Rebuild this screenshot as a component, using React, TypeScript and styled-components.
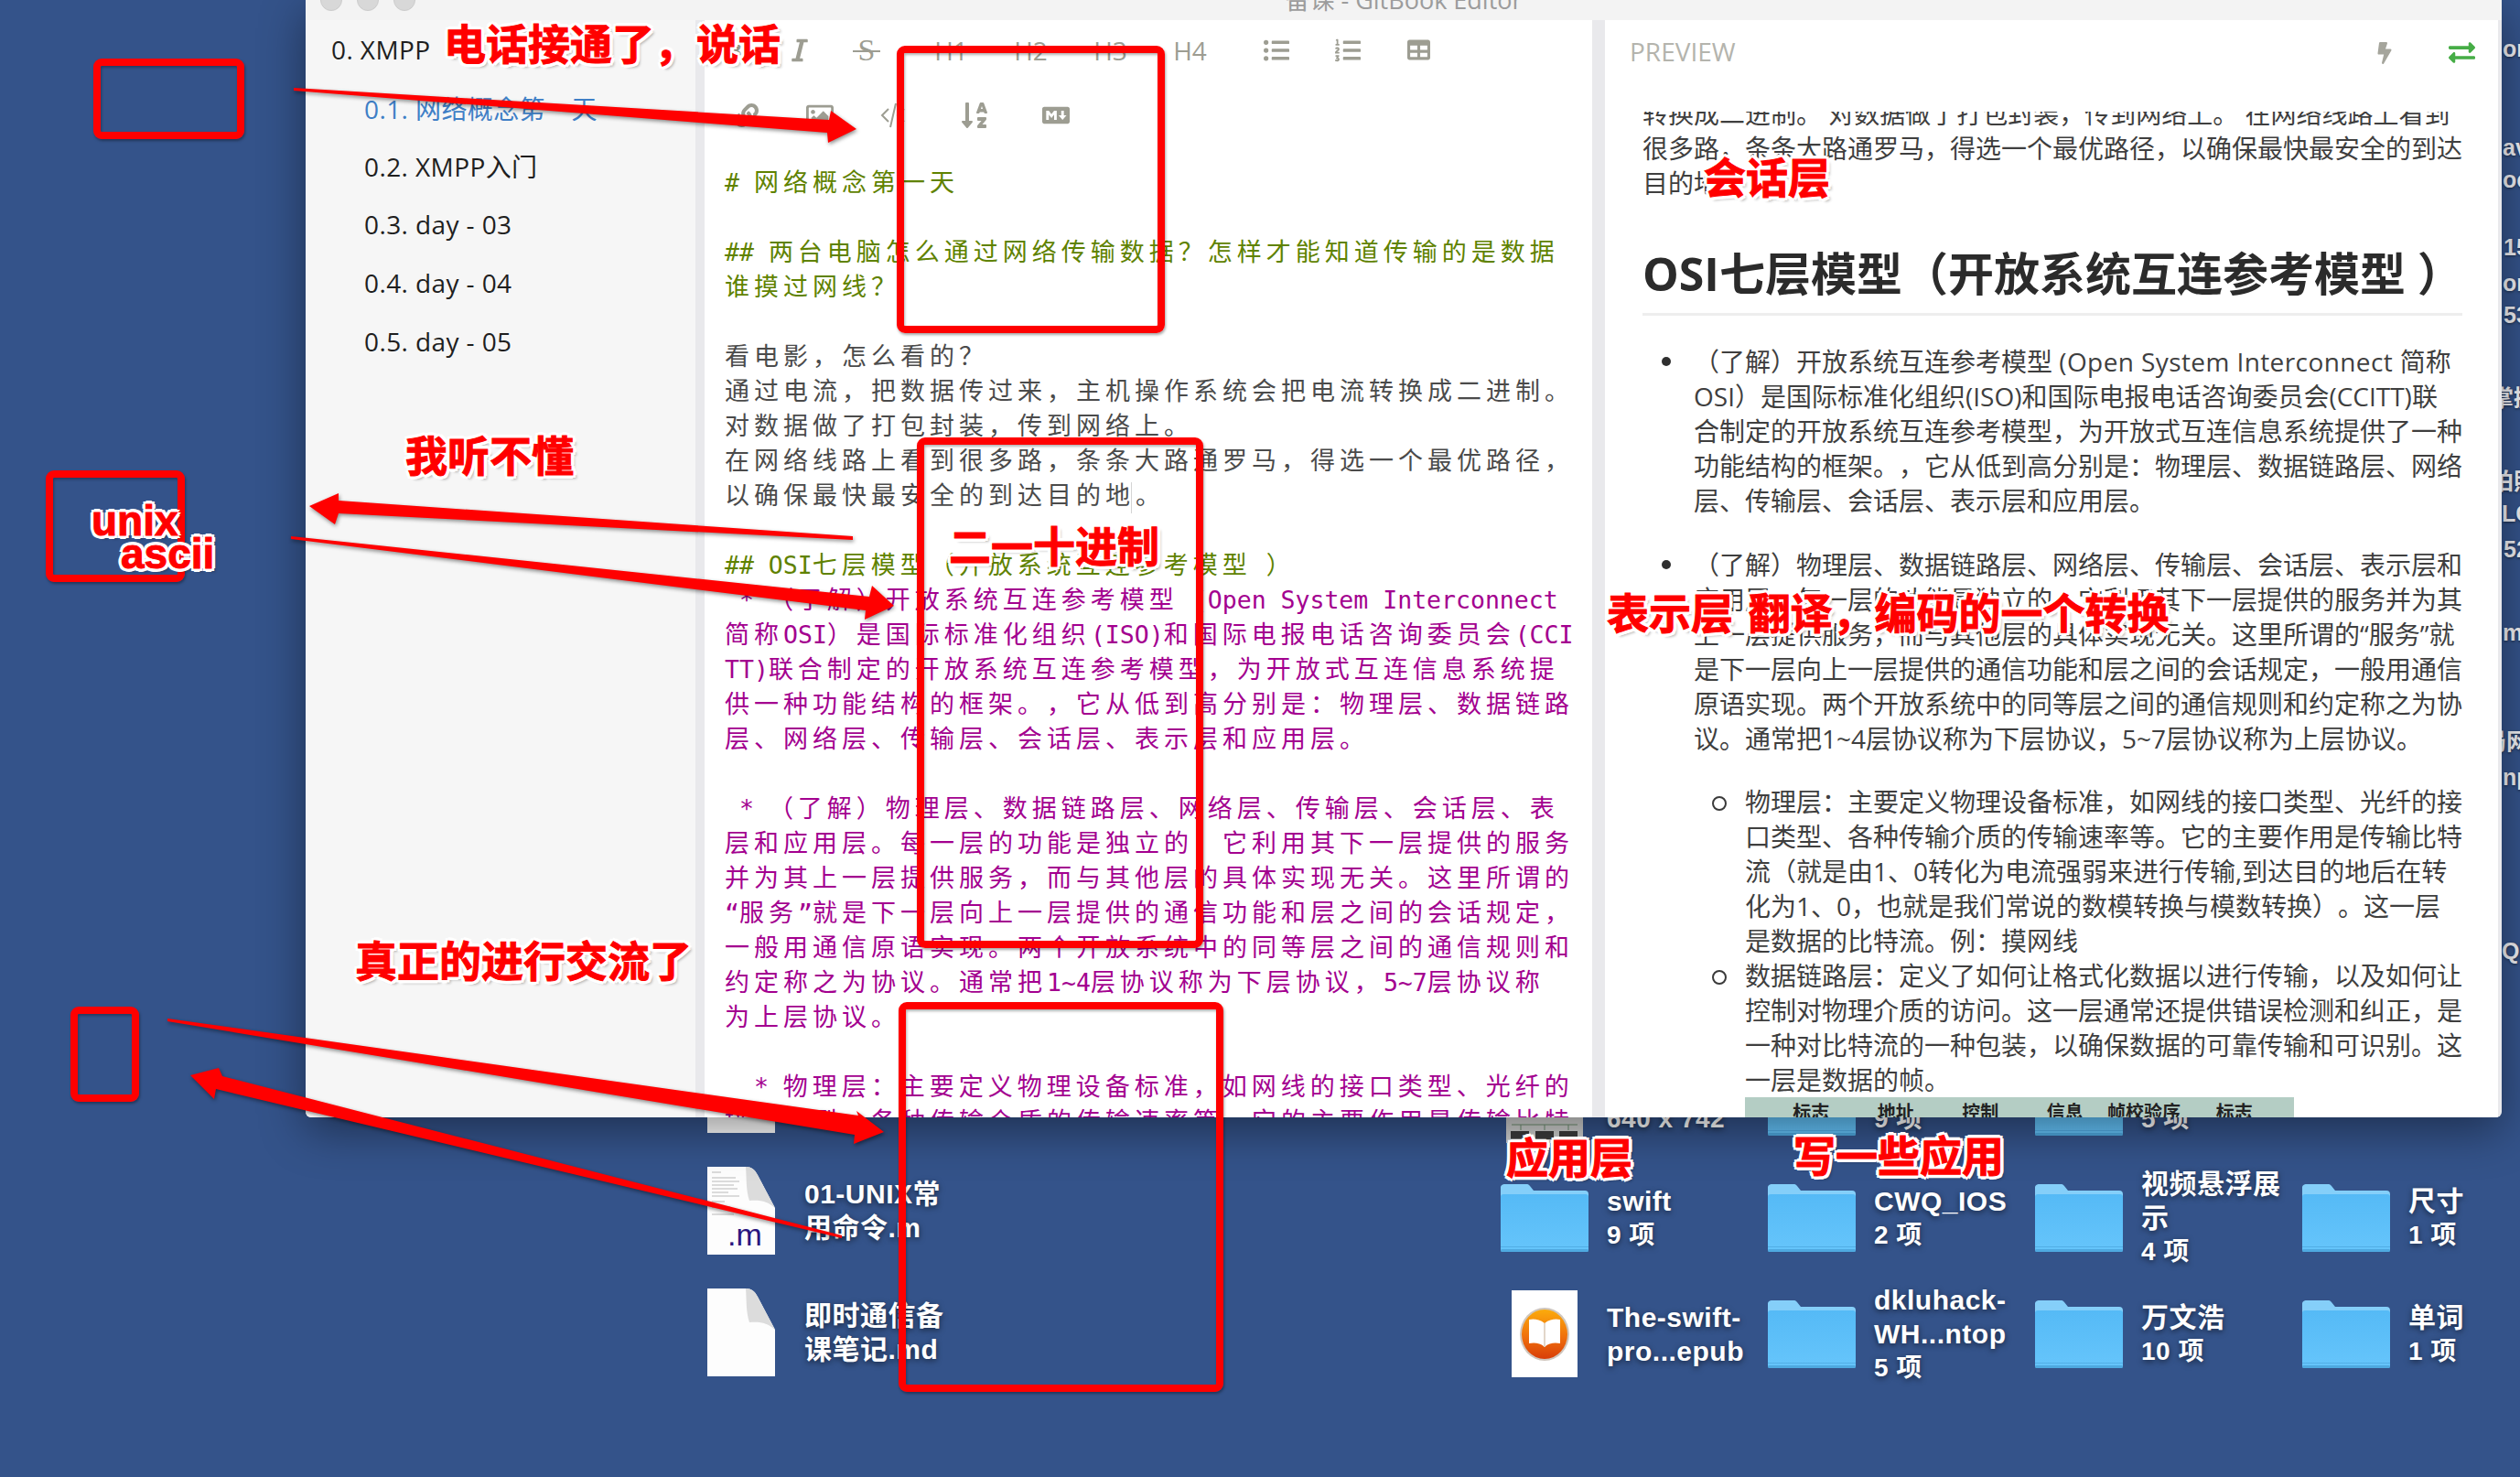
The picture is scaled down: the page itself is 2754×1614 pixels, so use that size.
import React from 'react';
import styled, { createGlobalStyle } from 'styled-components';
import {
  FaItalic,
  FaListUl,
  FaListOl,
  FaTable,
  FaLink,
  FaRegImage,
  FaSortAlphaDown,
  FaMarkdown,
  FaBolt,
  FaExchangeAlt,
} from 'react-icons/fa';

const CJK = '"Noto Sans CJK SC"';

const GlobalStyle = createGlobalStyle`
  html, body { margin: 0; padding: 0; background: #34538a; }
  * { box-sizing: border-box; text-spacing-trim: space-all; }
`;

const Desktop = styled.div`
  position: relative;
  width: 2754px;
  height: 1614px;
  overflow: hidden;
  background: #34538a;
  font-family: 'Liberation Sans', ${CJK}, sans-serif;
`;

/* ---------- desktop icons (free canvas) ---------- */

const IconGrid = styled.div`
  position: absolute;
  left: 1640px;
  top: 1140px;
  display: grid;
  grid-template-columns: repeat(4, 292px);
  grid-auto-rows: 127px;
`;

const FileColumn = styled.div`
  position: absolute;
  left: 773px;
  top: 1123px;
  display: grid;
  grid-template-columns: 330px;
  grid-auto-rows: 133px;
`;

const DesktopItem = styled.div`
  display: flex;
  align-items: center;
  gap: 20px;
`;

const FileItem = styled(DesktopItem)`
  gap: 32px;
`;

const IconSlot = styled.div`
  width: 96px;
  flex: none;
  display: flex;
  justify-content: center;
`;

const ItemText = styled.div`
  color: #fff;
  font-size: 30px;
  font-weight: 700;
  line-height: 37px;
  letter-spacing: 0.5px;
  white-space: pre-line;
  text-shadow: 0 2px 6px rgba(0, 0, 0, 0.55);
`;

const ItemSub = styled.div`
  font-weight: 600;
  font-size: 28px;
`;

const EdgeLabel = styled.div<{ $y: number; $x: number }>`
  position: absolute;
  left: ${(p) => p.$x}px;
  top: ${(p) => p.$y - 18}px;
  color: #f0f0f4;
  font-size: 25px;
  font-weight: 700;
  line-height: 36px;
  white-space: nowrap;
  text-shadow: 0 1px 3px rgba(0, 0, 0, 0.5);
`;

const Folder = () => (
  <svg width="96" height="74" viewBox="0 0 96 74">
    <defs>
      <linearGradient id="folderFront" x1="0" y1="0" x2="0" y2="1">
        <stop offset="0" stopColor="#55baf6" />
        <stop offset="1" stopColor="#66c5fb" />
      </linearGradient>
    </defs>
    <path d="M0 5a4 4 0 0 1 4-5h24a4 4 0 0 1 4 2l4 5h56a4 4 0 0 1 4 4v8H0z" fill="#85cff9" />
    <path d="M0 14a3 3 0 0 1 3-3h90a3 3 0 0 1 3 3v57a3 3 0 0 1-3 3H3a3 3 0 0 1-3-3z" fill="url(#folderFront)" />
    <rect x="0" y="68" width="96" height="1" fill="#52aee6" />
    <rect x="0" y="71" width="96" height="3" rx="1.5" fill="#4ea9e0" />
  </svg>
);

const DocIcon = ({ mark }: { mark?: boolean }) => (
  <svg width="74" height="96" viewBox="0 0 74 96">
    <path d="M0 0h42c6 0 10 3 13 9l19 36v51H0z" fill="#fdfdfd" />
    <path d="M42 0c6 0 10 3 13 9l19 36c-8-7-15-9-28-8-4-12-3-25-4-37z" fill="#dcdcdc" />
    {mark && (
      <g stroke="#b9b9b9" strokeWidth="1">
        <path d="M5 6h10M5 12h26M5 16h30M5 20h24M5 24h28M5 28h18M5 32h30M5 38h14M5 44h20M5 52h24" />
      </g>
    )}
    {mark && (
      <text x="22" y="86" fontFamily="Liberation Sans" fontSize="34" fill="#2a1680">
        .m
      </text>
    )}
  </svg>
);

const EpubIcon = () => (
  <svg width="72" height="96" viewBox="0 0 72 96">
    <defs>
      <linearGradient id="epub" x1="0" y1="0" x2="0" y2="1">
        <stop offset="0" stopColor="#fbab0c" />
        <stop offset="0.55" stopColor="#f0700c" />
        <stop offset="1" stopColor="#d83d08" />
      </linearGradient>
    </defs>
    <rect width="72" height="95" fill="#fff" />
    <ellipse cx="36" cy="48" rx="27" ry="29" fill="#cfc6bd" />
    <ellipse cx="36" cy="48" rx="25" ry="27" fill="url(#epub)" />
    <path d="M36 36c-6-5-13-5-17-4v26c5-1 12-1 17 4 5-5 12-5 17-4V32c-4-1-11-1-17 4z" fill="#fff" />
    <path d="M36 36v26" stroke="#d8c9b8" strokeWidth="1.5" />
  </svg>
);

const Thumb = () => (
  <svg width="84" height="90" viewBox="0 0 84 90">
    <rect width="84" height="90" fill="#cfd0cf" />
    <path d="M6 70h72M16 70v6M42 70v6M68 70v6" stroke="#6f8f72" strokeWidth="1" />
    <rect x="5" y="77" width="20" height="9" fill="#3d3d3d" />
    <rect x="32" y="77" width="20" height="9" fill="#3d3d3d" />
    <rect x="58" y="77" width="20" height="9" fill="#3d3d3d" />
  </svg>
);

/* ---------- window ---------- */

const Window = styled.div`
  position: absolute;
  left: 334px;
  top: 0;
  width: 2400px;
  height: 1221px;
  display: flex;
  flex-direction: column;
  background: #e9e9ec;
  border-radius: 0 0 6px 6px;
  box-shadow: 0 14px 50px rgba(0, 0, 0, 0.42);
  overflow: hidden;
`;

const TitleBar = styled.div`
  height: 22px;
  flex: none;
  background: #f3f3f3;
  display: grid;
  grid-template-columns: 1fr auto 1fr;
  overflow: hidden;
`;

const Lights = styled.div`
  display: flex;
  gap: 16px;
  padding-left: 16px;
  margin-top: -12px;
`;

const Light = styled.span`
  width: 24px;
  height: 24px;
  border-radius: 50%;
  background: #d8d8d8;
  border: 1px solid #cccccc;
`;

const Title = styled.div`
  margin-top: -15px;
  font-family: 'Open Sans', ${CJK}, sans-serif;
  font-size: 27px;
  line-height: 30px;
  color: #9c9c9c;
`;

const Panes = styled.div`
  flex: 1;
  min-height: 0;
  display: flex;
`;

const Sidebar = styled.nav`
  width: 426px;
  flex: none;
  margin-right: 10px;
  background: #f6f6f6;
  font-family: 'Open Sans', ${CJK}, sans-serif;
  font-size: 28px;
  letter-spacing: 0.4px;
  color: #1f1f1f;
`;

const SideItem = styled.div<{ $child?: boolean; $active?: boolean }>`
  height: 63.8px;
  display: flex;
  align-items: center;
  padding-left: ${(p) => (p.$child ? 64 : 28)}px;
  color: ${(p) => (p.$active ? '#3f7fc6' : 'inherit')};
`;

const Editor = styled.section`
  width: 970px;
  flex: none;
  margin-right: 14px;
  background: #fff;
  display: flex;
  flex-direction: column;
  overflow: hidden;
`;

const Toolbar = styled.div<{ $pad: number; $groupGap: number; $lift?: number }>`
  height: 69px;
  flex: none;
  display: flex;
  align-items: center;
  gap: ${(p) => p.$groupGap}px;
  padding-left: ${(p) => p.$pad}px;
  padding-bottom: ${(p) => p.$lift ?? 0}px;
  color: #9d9d92;
`;

const ToolGroup = styled.div`
  display: flex;
  align-items: center;
  gap: 50px;
`;

const Tool = styled.span<{ $w?: number }>`
  width: ${(p) => p.$w ?? 30}px;
  display: flex;
  align-items: center;
  justify-content: center;
  font-family: 'Open Sans', sans-serif;
  font-size: 28px;
  line-height: 34px;
`;

const StrikeS = styled.span`
  position: relative;
  font-family: 'Liberation Serif', serif;
  font-size: 34px;
  &::after {
    content: '';
    position: absolute;
    left: -6px;
    right: -6px;
    top: 17px;
    height: 2px;
    background: currentColor;
  }
`;

const CodeIcon = () => (
  <svg width="28" height="30" viewBox="0 0 28 30" fill="none" stroke="currentColor" strokeWidth="2">
    <path d="M9 8 2 15l7 7M26 8l-7 7 7 7M17 2l-6 26" />
  </svg>
);

const Code = styled.div`
  padding: 19px 0 0 22px;
  font-family: 'DejaVu Sans Mono', monospace;
  font-size: 26.5px;
  line-height: 38px;
`;

const CodeLine = styled.div<{ $kind: 'head' | 'text' | 'pink' }>`
  height: 38px;
  white-space: pre;
  color: ${(p) => (p.$kind === 'head' ? '#5f8200' : p.$kind === 'pink' ? '#a3008f' : '#4b4b4b')};
`;

const Wide = styled.span`
  font-family: ${CJK}, sans-serif;
  font-size: 27px;
  letter-spacing: 5px;
`;

const Caret = styled.span`
  display: inline-block;
  width: 0;
  height: 34px;
  margin-left: -4px;
  margin-right: 4px;
  vertical-align: middle;
  border-left: 1px solid #d4d4d4;
`;

const Preview = styled.section`
  flex: 1;
  min-width: 0;
  margin-right: 4px;
  background: #fff;
  display: flex;
  flex-direction: column;
`;

const PreviewHead = styled.header`
  height: 100px;
  flex: none;
  display: flex;
  justify-content: space-between;
  align-items: flex-start;
  padding: 17px 25px 0 27px;
  color: #b4b4ad;
  font-family: 'Open Sans', sans-serif;
  font-size: 28px;
  line-height: 34px;
  position: relative;
`;

const HeadIcons = styled.div`
  display: flex;
  align-items: center;
  gap: 58px;
  padding: 4px 0 0;
  color: #a5a59c;
`;

const Swap = styled.span`
  color: #46ad46;
  display: flex;
`;

const Doc = styled.article`
  flex: 1;
  min-height: 0;
  overflow: hidden;
  padding: 0 39px 0 41px;
  font-family: 'Open Sans', ${CJK}, sans-serif;
  font-size: 28px;
  line-height: 38px;
  color: #3f3f3f;
`;

const Intro = styled.p`
  margin: -17px 0 0;
`;

const Heading = styled.h2`
  margin: 50px 0 31px;
  padding-bottom: 13px;
  font-size: 50px;
  line-height: 60px;
  font-weight: 700;
  white-space: nowrap;
  color: #2b2b2b;
  border-bottom: 3px solid #eeeeee;
`;

const WideLatin = styled.span`
  letter-spacing: 0.4px;
`;

const List = styled.ul`
  margin: 0;
  padding-left: 56px;
  list-style: none;
`;

const Item = styled.li`
  position: relative;
  margin-bottom: 32px;
  &::before {
    content: '';
    position: absolute;
    left: -35px;
    top: 14px;
    width: 10px;
    height: 10px;
    border-radius: 50%;
    background: #2f2f2f;
  }
`;

const SubList = styled.ul`
  margin: 31px 0 0;
  padding-left: 56px;
  list-style: none;
`;

const SubItem = styled.li`
  position: relative;
  &::before {
    content: '';
    position: absolute;
    left: -36px;
    top: 13px;
    width: 12px;
    height: 12px;
    border-radius: 50%;
    border: 2px solid #3a3a3a;
  }
`;

const FrameImage = styled.div`
  width: 600px;
  height: 120px;
  margin-top: 0;
  padding: 5px 0 0 26px;
  background: #b4cdc4;
  display: grid;
  grid-template-columns: repeat(6, 92.5px);
  justify-items: center;
  align-content: start;
  color: #222;
  font-size: 20px;
  line-height: 24px;
  font-weight: 700;
`;

/* ---------- annotations ---------- */

const Overlay = styled.svg`
  position: absolute;
  inset: 0;
  filter: drop-shadow(1px 2px 2px rgba(0, 0, 0, 0.45));
`;

const RedBox = styled.div<{ $x: number; $y: number; $w: number; $h: number }>`
  position: absolute;
  left: ${(p) => p.$x}px;
  top: ${(p) => p.$y}px;
  width: ${(p) => p.$w}px;
  height: ${(p) => p.$h}px;
  border: 8px solid #ff0000;
  border-radius: 9px;
  box-shadow: 1px 2px 3px rgba(0, 0, 0, 0.35), inset 1px 2px 3px rgba(0, 0, 0, 0.3);
`;

const Callout = styled.div<{ $x: number; $y: number; $latin?: boolean }>`
  position: absolute;
  left: ${(p) => p.$x}px;
  top: ${(p) => p.$y - 3}px;
  color: #ff0000;
  font-family: ${(p) => (p.$latin ? "'Liberation Sans', sans-serif" : `${CJK}, sans-serif`)};
  font-size: 46px;
  font-weight: 700;
  line-height: 46px;
  word-spacing: 6px;
  white-space: pre;
  -webkit-text-stroke: 1px #ff0000;
  text-shadow: 4px 0 0 #fff, -4px 0 0 #fff, 0 4px 0 #fff, 0 -4px 0 #fff, 3px 3px 0 #fff,
    -3px 3px 0 #fff, 3px -3px 0 #fff, -3px -3px 0 #fff, 4px 4px 3px rgba(0, 0, 0, 0.3);
`;

/* ---------- data ---------- */

const code: [('head' | 'text' | 'pink'), string][] = [
  ['head', '# 网络概念第一天'],
  ['head', ''],
  ['head', '## 两台电脑怎么通过网络传输数据？怎样才能知道传输的是数据'],
  ['head', '谁摸过网线？'],
  ['text', ''],
  ['text', '看电影，怎么看的？'],
  ['text', '通过电流，把数据传过来，主机操作系统会把电流转换成二进制。'],
  ['text', '对数据做了打包封装，传到网络上。'],
  ['text', '在网络线路上看到很多路，条条大路通罗马，得选一个最优路径，'],
  ['text', '以确保最快最安全的到达目的地|。'],
  ['text', ''],
  ['head', '## OSI七层模型（开放系统互连参考模型 ）'],
  ['pink', ' * （了解）开放系统互连参考模型 (Open System Interconnect '],
  ['pink', '简称OSI）是国际标准化组织(ISO)和国际电报电话咨询委员会(CCI'],
  ['pink', 'TT)联合制定的开放系统互连参考模型，为开放式互连信息系统提'],
  ['pink', '供一种功能结构的框架。，它从低到高分别是：物理层、数据链路'],
  ['pink', '层、网络层、传输层、会话层、表示层和应用层。'],
  ['pink', ''],
  ['pink', ' * （了解）物理层、数据链路层、网络层、传输层、会话层、表'],
  ['pink', '层和应用层。每一层的功能是独立的，它利用其下一层提供的服务'],
  ['pink', '并为其上一层提供服务，而与其他层的具体实现无关。这里所谓的'],
  ['pink', '“服务”就是下一层向上一层提供的通信功能和层之间的会话规定，'],
  ['pink', '一般用通信原语实现。两个开放系统中的同等层之间的通信规则和'],
  ['pink', '约定称之为协议。通常把1~4层协议称为下层协议，5~7层协议称'],
  ['pink', '为上层协议。'],
  ['pink', ''],
  ['pink', '  * 物理层：主要定义物理设备标准，如网线的接口类型、光纤的'],
  ['pink', '接口类型、各种传输介质的传输速率等。它的主要作用是传输比特'],
];

const splitRuns = (text: string) =>
  text
    .split(/([\u3000-\u9fff\uff00-\uffef]+)/)
    .map((run, i) => (i % 2 ? <Wide key={i}>{run}</Wide> : run));

const renderLine = (text: string) => {
  const [before, after] = text.split('|');
  if (after === undefined) return splitRuns(text);
  return (
    <>
      {splitRuns(before)}
      <Caret />
      {splitRuns(after)}
    </>
  );
};

const boxes = [
  { x: 102, y: 64, w: 165, h: 88 },
  { x: 50, y: 514, w: 152, h: 122 },
  { x: 77, y: 1100, w: 75, h: 104 },
  { x: 980, y: 50, w: 293, h: 314 },
  { x: 1002, y: 478, w: 313, h: 558 },
  { x: 982, y: 1095, w: 355, h: 426 },
];

const callouts = [
  { x: 485, y: 25, t: '电话接通了，说话' },
  { x: 443, y: 475, t: '我听不懂' },
  { x: 1037, y: 574, t: '二一十进制' },
  { x: 1862, y: 171, t: '会话层' },
  { x: 1756, y: 647, t: '表示层 翻译，编码的一个转换' },
  { x: 388, y: 1027, t: '真正的进行交流了' },
  { x: 1646, y: 1242, t: '应用层' },
  { x: 1960, y: 1240, t: '写一些应用' },
];

const arrows = [
  '321,96 906,131 908,121 936,141 905,156 904,145 321,99',
  '338,553 370,539 370,547 932,586 932,590 370,561 366,573',
  '318,586 950,652 953,640 977,662 945,677 946,667 318,589',
  '183,1113 938,1219 936,1214 966,1237 933,1250 934,1240 183,1116',
  '208,1175 239,1167 243,1176 920,1350 920,1353 236,1190 234,1201',
];

const edge = [
  { x: 2735, y: 53, t: 'or' },
  { x: 2735, y: 161, t: 'av' },
  { x: 2735, y: 196, t: 'oc' },
  { x: 2736, y: 270, t: '15' },
  { x: 2735, y: 309, t: 'or' },
  { x: 2736, y: 344, t: '53' },
  { x: 2722, y: 435, t: '掌握' },
  { x: 2722, y: 526, t: '拍照' },
  { x: 2734, y: 561, t: 'LO' },
  { x: 2736, y: 600, t: '52' },
  { x: 2735, y: 691, t: 'm' },
  { x: 2714, y: 810, t: '局网' },
  { x: 2735, y: 849, t: 'np' },
  { x: 2734, y: 1039, t: 'QL' },
];

const desktopCells: { icon: React.ReactNode; name?: string; sub?: string }[] = [
  { icon: <Thumb />, name: '分层.png', sub: '640 x 742' },
  { icon: <Folder />, name: 'xmpp', sub: '9 项' },
  { icon: <Folder />, name: 'demo', sub: '5 项' },
  { icon: null },
  { icon: <Folder />, name: 'swift', sub: '9 项' },
  { icon: <Folder />, name: 'CWQ_IOS', sub: '2 项' },
  { icon: <Folder />, name: '视频悬浮展\n示', sub: '4 项' },
  { icon: <Folder />, name: '尺寸', sub: '1 项' },
  { icon: <EpubIcon />, name: 'The-swift-\npro...epub' },
  { icon: <Folder />, name: 'dkluhack-\nWH...ntop', sub: '5 项' },
  { icon: <Folder />, name: '万文浩', sub: '10 项' },
  { icon: <Folder />, name: '单词', sub: '1 项' },
];

export default function App() {
  return (
    <Desktop>
      <GlobalStyle />

      <FileColumn>
        <FileItem>
          <DocIcon />
        </FileItem>
        <FileItem>
          <DocIcon mark />
          <ItemText>{'01-UNIX常\n用命令.m'}</ItemText>
        </FileItem>
        <FileItem>
          <DocIcon />
          <ItemText>{'即时通信备\n课笔记.md'}</ItemText>
        </FileItem>
      </FileColumn>

      <IconGrid>
        {desktopCells.map((cell, i) => (
          <DesktopItem key={i}>
            {cell.icon && <IconSlot>{cell.icon}</IconSlot>}
            {cell.name && (
              <ItemText>
                {cell.name}
                {cell.sub && <ItemSub>{cell.sub}</ItemSub>}
              </ItemText>
            )}
          </DesktopItem>
        ))}
      </IconGrid>

      {edge.map((e, i) => (
        <EdgeLabel key={i} $x={e.x} $y={e.y}>
          {e.t}
        </EdgeLabel>
      ))}

      <Window>
        <TitleBar>
          <Lights>
            <Light />
            <Light />
            <Light />
          </Lights>
          <Title>备课 - GitBook Editor</Title>
        </TitleBar>
        <Panes>
          <Sidebar>
            <SideItem>0. XMPP</SideItem>
            <SideItem $child $active>
              0.1. 网络概念第一天
            </SideItem>
            <SideItem $child>0.2. XMPP入门</SideItem>
            <SideItem $child>0.3. day - 03</SideItem>
            <SideItem $child>0.4. day - 04</SideItem>
            <SideItem $child>0.5. day - 05</SideItem>
          </Sidebar>

          <Editor>
            <Toolbar $pad={21} $groupGap={62} $lift={4}>
              <ToolGroup>
                <Tool $w={22}>
                  <b>B</b>
                </Tool>
                <Tool $w={22}>
                  <FaItalic size={28} />
                </Tool>
                <Tool $w={24}>
                  <StrikeS>S</StrikeS>
                </Tool>
              </ToolGroup>
              <ToolGroup>
                <Tool $w={37}>H1</Tool>
                <Tool $w={37}>H2</Tool>
                <Tool $w={37}>H3</Tool>
                <Tool $w={37}>H4</Tool>
              </ToolGroup>
              <ToolGroup>
                <Tool $w={28}>
                  <FaListUl size={28} />
                </Tool>
                <Tool $w={28}>
                  <FaListOl size={28} />
                </Tool>
                <Tool $w={26}>
                  <FaTable size={25} />
                </Tool>
              </ToolGroup>
            </Toolbar>
            <Toolbar $pad={31} $groupGap={59}>
              <ToolGroup>
                <Tool>
                  <FaLink size={26} />
                </Tool>
                <Tool>
                  <FaRegImage size={30} />
                </Tool>
                <Tool>
                  <CodeIcon />
                </Tool>
              </ToolGroup>
              <Tool>
                <FaSortAlphaDown size={32} />
              </Tool>
              <Tool>
                <FaMarkdown size={32} />
              </Tool>
            </Toolbar>
            <Code>
              {code.map(([kind, text], i) => (
                <CodeLine key={i} $kind={kind}>
                  {renderLine(text)}
                </CodeLine>
              ))}
            </Code>
          </Editor>

          <Preview>
            <PreviewHead>
              <span>PREVIEW</span>
              <HeadIcons>
                <FaBolt size={24} />
                <Swap>
                  <FaExchangeAlt size={29} />
                </Swap>
              </HeadIcons>
            </PreviewHead>
            <Doc>
              <Intro>
                转换成二进制。 对数据做了打包封装，传到网络上。 在网络线路上看到很多路，条条大路通罗马，得选一个最优路径，以确保最快最安全的到达目的地。
              </Intro>
              <Heading>OSI七层模型（开放系统互连参考模型 ）</Heading>
              <List>
                <Item>
                  （了解）开放系统互连参考模型 <WideLatin>(Open System Interconnect </WideLatin>简称OSI）是国际标准化组织(ISO)和国际电报电话咨询委员会(CCITT)联合制定的开放系统互连参考模型，为开放式互连信息系统提供了一种功能结构的框架。，它从低到高分别是：物理层、数据链路层、网络层、传输层、会话层、表示层和应用层。
                </Item>
                <Item>
                  （了解）物理层、数据链路层、网络层、传输层、会话层、表示层和应用层。每一层的功能是独立的，它利用其下一层提供的服务并为其上一层提供服务，而与其他层的具体实现无关。这里所谓的“服务”就是下一层向上一层提供的通信功能和层之间的会话规定，一般用通信原语实现。两个开放系统中的同等层之间的通信规则和约定称之为协议。通常把1~4层协议称为下层协议，5~7层协议称为上层协议。
                  <SubList>
                    <SubItem>
                      物理层：主要定义物理设备标准，如网线的接口类型、光纤的接口类型、各种传输介质的传输速率等。它的主要作用是传输比特流（就是由1、0转化为电流强弱来进行传输,到达目的地后在转化为1、0，也就是我们常说的数模转换与模数转换）。这一层是数据的比特流。例：摸网线
                    </SubItem>
                    <SubItem>
                      数据链路层：定义了如何让格式化数据以进行传输，以及如何让控制对物理介质的访问。这一层通常还提供错误检测和纠正，是一种对比特流的一种包装，以确保数据的可靠传输和可识别。这一层是数据的帧。
                      <FrameImage>
                        <span>标志</span>
                        <span>地址</span>
                        <span>控制</span>
                        <span>信息</span>
                        <span>帧校验序列</span>
                        <span>标志</span>
                      </FrameImage>
                    </SubItem>
                  </SubList>
                </Item>
              </List>
            </Doc>
          </Preview>
        </Panes>
      </Window>

      {boxes.map((b, i) => (
        <RedBox key={i} $x={b.x} $y={b.y} $w={b.w} $h={b.h} />
      ))}
      <Overlay width="2754" height="1614" viewBox="0 0 2754 1614">
        {arrows.map((pts, i) => (
          <polygon key={i} points={pts} fill="#ff0000" />
        ))}
      </Overlay>
      {callouts.map((c, i) => (
        <Callout key={i} $x={c.x} $y={c.y}>
          {c.t}
        </Callout>
      ))}
      <Callout $latin $x={100} $y={549}>
        unix
      </Callout>
      <Callout $latin $x={132} $y={585}>
        ascii
      </Callout>
    </Desktop>
  );
}
